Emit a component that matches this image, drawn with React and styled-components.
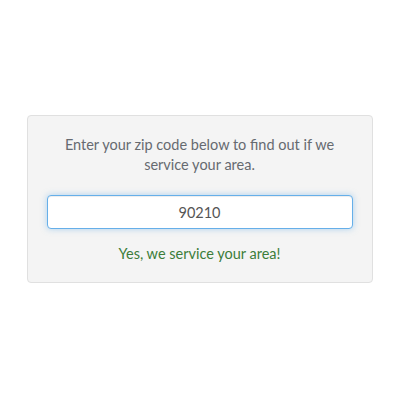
import React from "react";
import styled, { createGlobalStyle } from "styled-components";

const Global = createGlobalStyle`
  html, body { margin: 0; padding: 0; background: #ffffff; }
  body { font-family: Lato, "Open Sans", "Liberation Sans", sans-serif; }
`;

const Page = styled.div`
  width: 400px;
  height: 400px;
  display: flex;
  align-items: center;
  justify-content: center;
`;

const Card = styled.div`
  box-sizing: border-box;
  width: 346px;
  margin-left: -1px;
  margin-top: -2px;
  padding: 19px 19px 18px;
  background: #f4f4f4;
  border: 1px solid #e0e0e0;
  border-radius: 4px;
  display: flex;
  flex-direction: column;
  align-items: stretch;
  text-align: center;
`;

const Prompt = styled.p`
  margin: 0 10px;
  font-size: 14.5px;
  line-height: 20px;
  color: #666a70;
`;

const ZipInput = styled.input`
  box-sizing: border-box;
  margin-top: 20px;
  height: 34px;
  width: 100%;
  border: 1px solid #66afe9;
  border-radius: 4px;
  background: #fff;
  box-shadow: inset 0 1px 1px rgba(0,0,0,0.075), 0 0 6px rgba(102,175,233,0.5);
  outline: none;
  text-align: center;
  font-family: inherit;
  font-size: 14.5px;
  color: #555555;
  padding: 0 12px;
`;

const Status = styled.p`
  margin: 15px 0 0;
  font-size: 14.5px;
  line-height: 20px;
  color: ${(p) => (p.ok ? "#3c7d3a" : "#a94442")};
`;

export default function App() {
  return (
    <>
      <Global />
      <Page>
        <Card>
          <Prompt>Enter your zip code below to find out if we service your area.</Prompt>
          <ZipInput defaultValue="90210" />
          <Status ok>Yes, we service your area!</Status>
        </Card>
      </Page>
    </>
  );
}
